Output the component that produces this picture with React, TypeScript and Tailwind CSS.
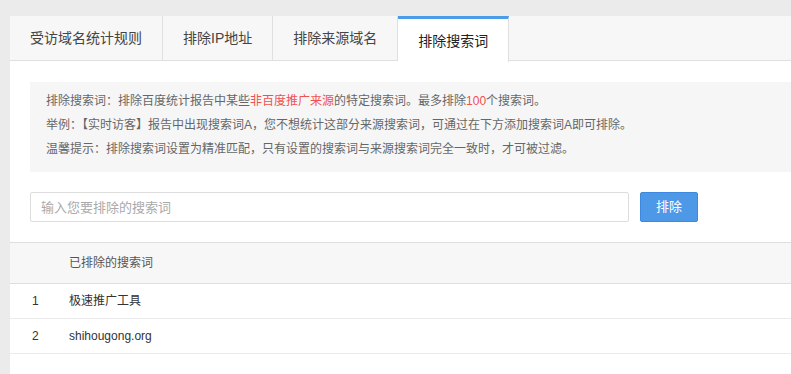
const TABS = ["受访域名统计规则", "排除IP地址", "排除来源域名", "排除搜索词"];
const ACTIVE = 3;

const ROWS = ["极速推广工具", "shihougong.org"];

const font = "font-['Liberation_Sans','Noto_Sans_CJK_SC',sans-serif]";

export default function App() {
  return (
    <div className={`min-h-[374px] w-[791px] overflow-hidden bg-[#ebebeb] pl-[10px] pt-[16px] ${font}`}>
      <div className="min-h-[358px] bg-white">
        {/* tabs */}
        <div className="flex h-[45px] border-b border-[#e0e0e0] bg-[#f7f7f7]">
          {TABS.map((t, i) => (
            <div
              key={t}
              className={
                i === ACTIVE
                  ? "-mb-px flex h-[46px] items-center border-r border-t-[3px] border-r-[#e0e0e0] border-t-[#4a9be8] bg-white px-[20px] pt-[2px] text-[14px] text-[#222]"
                  : "flex h-full items-center border-r border-[#e0e0e0] px-[20px] text-[14px] text-[#444]"
              }
            >
              {t}
            </div>
          ))}
        </div>

        {/* notice */}
        <div className="mt-[21px] ml-[20px] bg-[#f6f6f6] px-[16px] pt-[7px] pb-[11px] text-[12px] leading-[24px] text-[#666]">
          <p>
            排除搜索词：排除百度统计报告中某些<span className="text-[#f0514f]">非百度推广来源</span>的特定搜索词。最多排除<span className="text-[#f0514f]">100</span>个搜索词。
          </p>
          <p>举例：【实时访客】报告中出现搜索词A，您不想统计这部分来源搜索词，可通过在下方添加搜索词A即可排除。</p>
          <p>温馨提示：排除搜索词设置为精准匹配，只有设置的搜索词与来源搜索词完全一致时，才可被过滤。</p>
        </div>

        {/* input row */}
        <div className="mt-[20px] ml-[20px] flex items-center gap-[11px]">
          <input
            placeholder="输入您要排除的搜索词"
            className="h-[30px] w-[599px] rounded-[2px] border border-[#dddddd] px-[10px] text-[13px] outline-none placeholder:text-[#aaaaaa]"
          />
          <button className="h-[30px] w-[58px] rounded-[2px] border border-[#3b8ae0] bg-[#4e98e8] text-[13px] text-white">
            排除
          </button>
        </div>

        {/* table */}
        <div className="mt-[20px] text-[12px] text-[#333]">
          <div className="flex h-[42px] items-center border-y border-[#dedede] bg-[#f7f7f7] text-[#555]">
            <div className="w-[59px]" />
            <div>已排除的搜索词</div>
          </div>
          {ROWS.map((r, i) => (
            <div key={r} className="flex h-[35px] items-center border-b border-[#ebebeb]">
              <div className="w-[59px] pl-[22px]">{i + 1}</div>
              <div>{r}</div>
            </div>
          ))}
        </div>
      </div>
    </div>
  );
}
